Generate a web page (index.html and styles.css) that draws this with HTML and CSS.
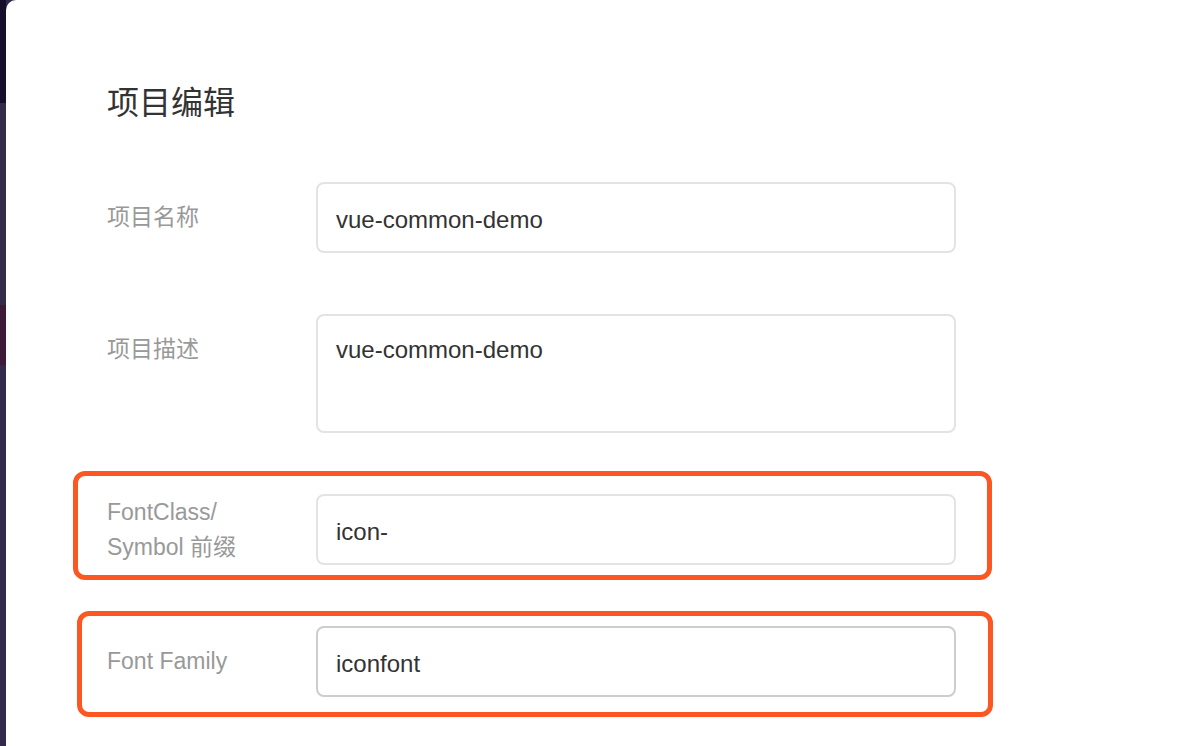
FILE: index.html
```html
<!DOCTYPE html>
<html lang="zh-CN">
<head>
<meta charset="utf-8">
<title>项目编辑</title>
<link rel="stylesheet" href="styles.css">
</head>
<body>
<div class="backdrop">
  <div class="band band-top"></div>
  <div class="band band-mid"></div>
  <div class="band band-red"></div>
  <div class="band band-low"></div>
</div>
<div class="modal">
  <h1 class="title">项目编辑</h1>
  <div class="form">
    <div class="row">
      <div class="label">项目名称</div>
      <div class="field">vue-common-demo</div>
    </div>
    <div class="row row-top">
      <div class="label">项目描述</div>
      <div class="field area">vue-common-demo</div>
    </div>
    <div class="row mark mark-a">
      <div class="label">FontClass/<br>Symbol 前缀</div>
      <div class="field">icon-</div>
    </div>
    <div class="row mark mark-b">
      <div class="label">Font Family</div>
      <div class="field active">iconfont</div>
    </div>
  </div>
</div>
</body>
</html>
```
FILE: styles.css
```css
html, body {
  margin: 0;
  padding: 0;
  height: 100%;
  overflow: hidden;
}
body {
  display: flex;
  background: #33294a;
  font-family: "Liberation Sans", "Noto Sans CJK SC", sans-serif;
}
.backdrop {
  width: 6px;
  display: flex;
  flex-direction: column;
  flex-shrink: 0;
}
.band-top { height: 103px; background: #160f2c; }
.band-mid { height: 202px; background: #342a4a; }
.band-red { height: 60px; background: #3d1a38; }
.band-low { flex: 1; background: #33294a; }
.modal {
  flex: 1;
  background: #ffffff;
  border-top-left-radius: 10px;
  padding: 80px 0 0 101px;
}
.title {
  margin: 0;
  font-family: "Noto Sans CJK SC", sans-serif;
  font-size: 32px;
  font-weight: 400;
  line-height: 41px;
  color: #333333;
}
.form {
  margin-top: 61px;
  display: flex;
  flex-direction: column;
  gap: 61px;
}
.row {
  display: flex;
  align-items: center;
  width: 849px;
  position: relative;
}
.row-top { align-items: flex-start; }
.label {
  width: 209px;
  flex-shrink: 0;
  font-size: 23px;
  line-height: 35px;
  color: #999999;
}
.row-top .label { padding-top: 18px; }
.field {
  box-sizing: border-box;
  width: 640px;
  height: 71px;
  padding: 20px 18px 0;
  border: 2px solid #e3e3e3;
  border-radius: 8px;
  font-size: 24px;
  line-height: 31px;
  color: #333333;
}
.row-top .field { padding-top: 18px; }
.area { height: 119px; }
.active { border-color: #cdcdcd; }
.mark::after {
  content: "";
  position: absolute;
  border: 5px solid #fc5722;
  border-radius: 12px;
  pointer-events: none;
}
.mark-a::after { top: -23px; bottom: -15px; left: -34px; right: -36px; }
.mark-b::after { top: -15px; bottom: -20px; left: -30px; right: -37px; }
```
